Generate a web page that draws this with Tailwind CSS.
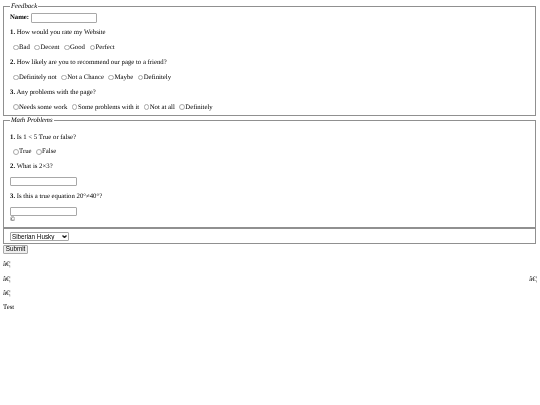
<!DOCTYPE html>
<html lang="en">
<head>
  <meta charset="UTF-8" />
  <title>Feedback</title>
  <script src="https://cdn.jsdelivr.net/npm/@tailwindcss/browser@4"></script>
</head>
<body class="bg-white text-black font-['Liberation_Serif',serif] text-[6.75px] leading-[9px] [text-rendering:geometricPrecision]">
  <form class="px-[3px] pt-[2px] blur-[0.35px]">

    <!-- Feedback -->
    <fieldset class="border border-[#909090] px-[6px] mr-[1px] h-[114px]">
      <legend class="italic px-[1px] leading-[8px]"><span class="relative top-[1px]">Feedback</span></legend>
      <div class="flex flex-col gap-[5.85px] mt-[3px]">
        <div class="flex items-center gap-[2px] h-[9.5px]"><b>Name:</b><input type="text" class="w-[66px] h-[9.5px] border border-[#a8a8a8] rounded-[1px]" /></div>
        <p><b>1.</b> How would you rate my Website</p>
        <div class="flex items-center gap-[4.5px] pl-[3px]">
          <label class="flex items-center gap-[0.5px]"><span class="w-[5.5px] h-[5.5px] rounded-full border border-[#a8a8a8]"></span>Bad</label>
          <label class="flex items-center gap-[0.5px]"><span class="w-[5.5px] h-[5.5px] rounded-full border border-[#a8a8a8]"></span>Decent</label>
          <label class="flex items-center gap-[0.5px]"><span class="w-[5.5px] h-[5.5px] rounded-full border border-[#a8a8a8]"></span>Good</label>
          <label class="flex items-center gap-[0.5px]"><span class="w-[5.5px] h-[5.5px] rounded-full border border-[#a8a8a8]"></span>Perfect</label>
        </div>
        <p><b>2.</b> How likely are you to recommend our page to a friend?</p>
        <div class="flex items-center gap-[4.5px] pl-[3px]">
          <label class="flex items-center gap-[0.5px]"><span class="w-[5.5px] h-[5.5px] rounded-full border border-[#a8a8a8]"></span>Definitely not</label>
          <label class="flex items-center gap-[0.5px]"><span class="w-[5.5px] h-[5.5px] rounded-full border border-[#a8a8a8]"></span>Not a Chance</label>
          <label class="flex items-center gap-[0.5px]"><span class="w-[5.5px] h-[5.5px] rounded-full border border-[#a8a8a8]"></span>Maybe</label>
          <label class="flex items-center gap-[0.5px]"><span class="w-[5.5px] h-[5.5px] rounded-full border border-[#a8a8a8]"></span>Definitely</label>
        </div>
        <p><b>3.</b> Any problems with the page?</p>
        <div class="flex items-center gap-[4.5px] pl-[3px]">
          <label class="flex items-center gap-[0.5px]"><span class="w-[5.5px] h-[5.5px] rounded-full border border-[#a8a8a8]"></span>Needs some work</label>
          <label class="flex items-center gap-[0.5px]"><span class="w-[5.5px] h-[5.5px] rounded-full border border-[#a8a8a8]"></span>Some problems with it</label>
          <label class="flex items-center gap-[0.5px]"><span class="w-[5.5px] h-[5.5px] rounded-full border border-[#a8a8a8]"></span>Not at all</label>
          <label class="flex items-center gap-[0.5px]"><span class="w-[5.5px] h-[5.5px] rounded-full border border-[#a8a8a8]"></span>Definitely</label>
        </div>
      </div>
    </fieldset>

    <!-- Math Problems -->
    <fieldset class="border border-[#909090] px-[6px] mr-[1px] h-[112px]">
      <legend class="italic px-[1px] leading-[8px]"><span class="relative top-[1px]">Math Problems</span></legend>
      <div class="flex flex-col gap-[5.85px] mt-[8.5px]">
        <p><b>1.</b> Is 1 &lt; 5 True or false?</p>
        <div class="flex items-center gap-[4.5px] pl-[3px]">
          <label class="flex items-center gap-[0.5px]"><span class="w-[5.5px] h-[5.5px] rounded-full border border-[#a8a8a8]"></span>True</label>
          <label class="flex items-center gap-[0.5px]"><span class="w-[5.5px] h-[5.5px] rounded-full border border-[#a8a8a8]"></span>False</label>
        </div>
        <p><b>2.</b> What is 2×3?</p>
        <input type="text" class="block w-[67px] h-[9px] border border-[#a8a8a8] rounded-[1px]" />
        <p><b>3.</b> Is this a true equation 20°≠40°?</p>
        <div>
          <input type="text" class="block w-[67px] h-[9px] border border-[#a8a8a8] rounded-[1px]" />
          <p class="-mt-[0.5px]">©</p>
        </div>
      </div>
    </fieldset>

    <fieldset class="border border-[#909090] px-[6px] mr-[1px] h-[16px] flex items-center">
      <div class="relative w-[59px] h-[9px]">
        <select class="appearance-none block w-full h-full p-0 pl-[1px] border border-[#a8a8a8] rounded-[1px] font-['Liberation_Sans',sans-serif] text-[6.3px] leading-[7px]">
          <option>Siberian Husky</option>
        </select>
        <svg class="absolute right-[2px] top-[3px] w-[5px] h-[3px]" viewBox="0 0 5 3" fill="none" stroke="#222" stroke-width="1.4"><path d="M0.5 0.5 2.5 2.5 4.5 0.5" /></svg>
      </div>
    </fieldset>

    <button type="button" class="block mt-[1px] h-[9px] w-[25px] bg-[#efefef] border border-[#a8a8a8] rounded-[1px] font-['Liberation_Sans',sans-serif] text-[6.3px] leading-none">Submit</button>

    <div class="flex flex-col gap-[5.3px] mt-[6.25px]">
      <p>â€&brvbar;</p>
      <div class="flex justify-between"><span>â€&brvbar;</span><span>â€&brvbar;</span></div>
      <p>â€&brvbar;</p>
      <p>Test</p>
    </div>
  </form>
</body>
</html>
